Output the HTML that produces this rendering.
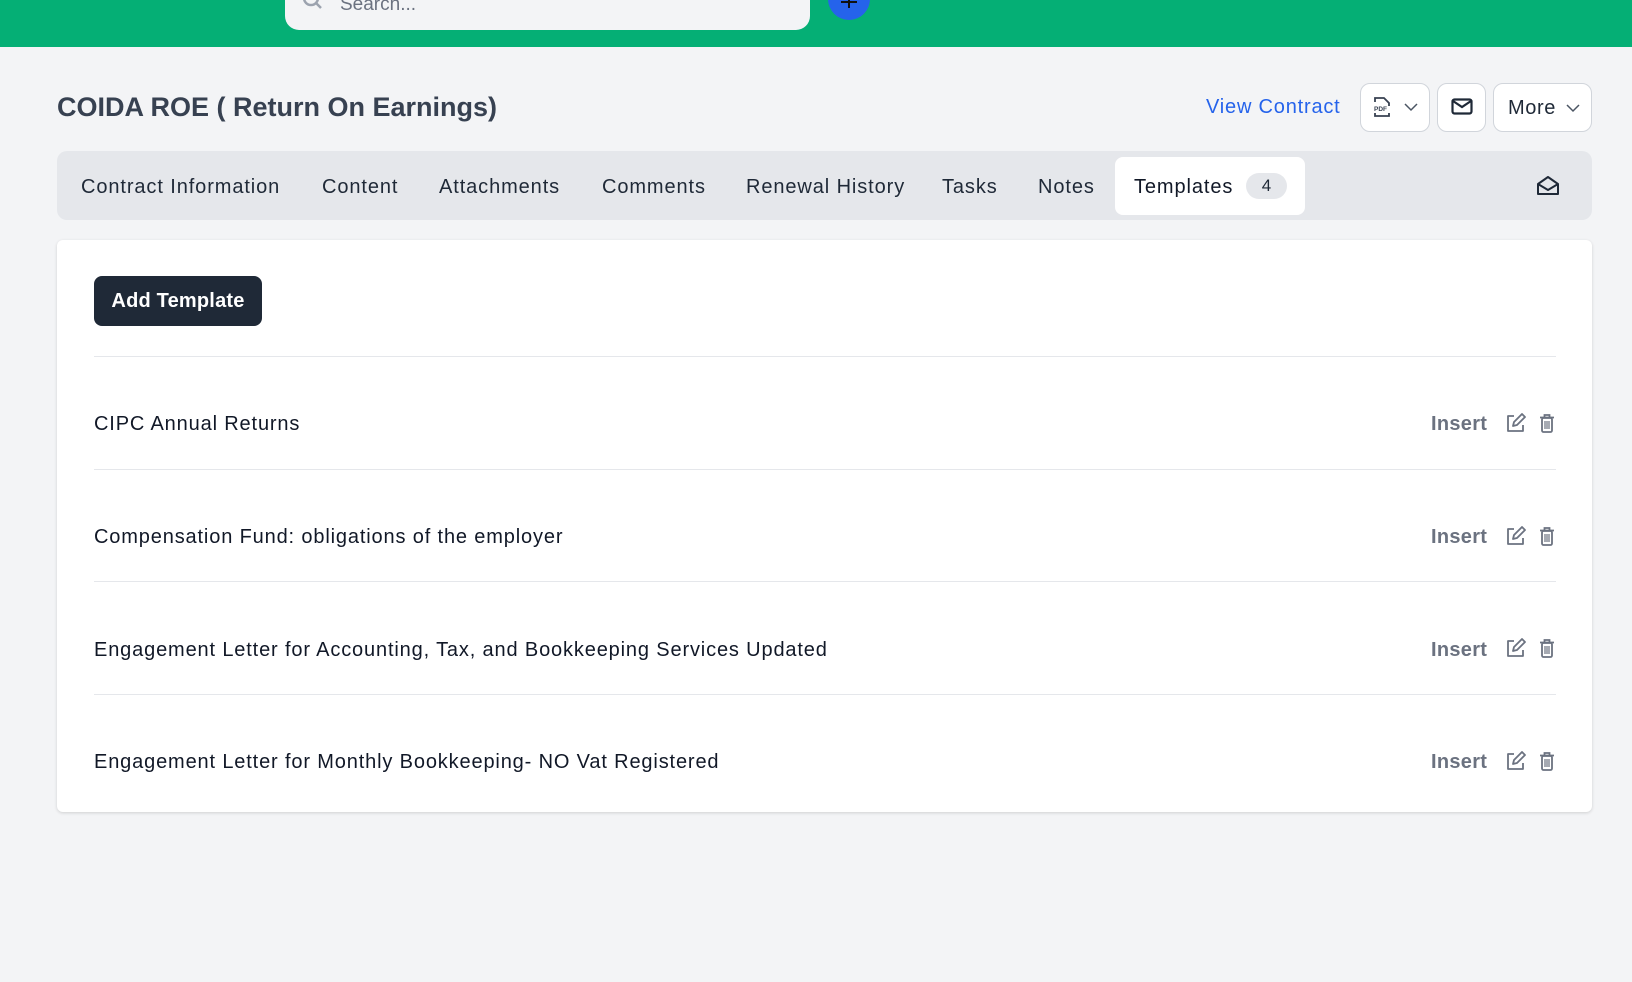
<!DOCTYPE html>
<html><head><meta charset="utf-8"><style>
*{box-sizing:border-box;margin:0;padding:0}
body{width:1632px;height:982px;background:#f3f4f6;font-family:"Liberation Sans",sans-serif;position:relative;overflow:hidden;color:#111827}
.abs{position:absolute}
.hdr{left:0;top:0;width:1632px;height:47px;background:#05af75}
.search{left:285px;top:-20px;width:525px;height:50px;background:#f3f4f6;border-radius:14px}
.plus{left:828px;top:-22px;width:42px;height:42px;border-radius:50%;background:#2563eb}
h1{position:absolute;left:57px;top:92px;font-size:27px;font-weight:bold;color:#374151}
.btn{position:absolute;background:#fff;border:1px solid #d1d5db;border-radius:10px;top:83px;height:49px}
.tabs{left:57px;top:151px;width:1535px;height:69px;background:#e5e7eb;border-radius:10px}
.tab{position:absolute;top:176px;font-size:20px;color:#1f2937;letter-spacing:0.9px}
.card{left:57px;top:240px;width:1535px;height:572px;background:#fff;border-radius:6px;box-shadow:0 1px 3px rgba(0,0,0,.15)}
.row{position:absolute;left:94px;font-size:20px;color:#111827;letter-spacing:0.85px}
.ins{position:absolute;left:1431px;font-size:20px;color:#6b7280;font-weight:bold;letter-spacing:0.3px}
.sep{position:absolute;left:94px;width:1462px;height:1px;background:#e5e7eb}
</style></head><body>
<div class="abs hdr"></div>
<div class="abs search"></div>
<svg class="abs" style="left:302px;top:-6px" width="22" height="20" viewBox="0 0 22 20"><circle cx="9" cy="4" r="7" fill="none" stroke="#9ca3af" stroke-width="2.5"/><path d="M14 9l5 5" stroke="#9ca3af" stroke-width="2.5"/></svg>
<div class="abs" style="left:340px;top:-6px;font-size:19px;color:#6b7280">Search...</div>
<div class="abs plus"></div>
<svg class="abs" style="left:839px;top:0" width="20" height="10"><path d="M10 0v8M2 2h16" stroke="#111" stroke-width="2"/></svg>
<h1>COIDA ROE ( Return On Earnings)</h1>
<div class="abs" style="left:1206px;top:96px;font-size:20px;color:#2563eb;letter-spacing:0.8px">View Contract</div>
<div class="btn" style="left:1360px;width:70px"></div>
<svg class="abs" style="left:1373px;top:96px" width="18" height="22" viewBox="0 0 18 22"><path d="M2 6V2h9l5 5v3M2 17v3h14v-3" fill="none" stroke="#374151" stroke-width="1.8"/><text x="1" y="15" font-size="6.5" font-weight="bold" fill="#374151" font-family="Liberation Sans">PDF</text></svg>
<svg class="abs" style="left:1404px;top:102px" width="14" height="10"><path d="M1 2l6 6 6-6" fill="none" stroke="#4b5563" stroke-width="1.5"/></svg>
<div class="btn" style="left:1437px;width:49px"></div>
<svg class="abs" style="left:1451px;top:98px" width="22" height="18"><rect x="1.5" y="1.5" width="19" height="14" rx="2" fill="none" stroke="#1f2937" stroke-width="2.2"/><path d="M2 3l9 6 9-6" fill="none" stroke="#1f2937" stroke-width="2.2"/></svg>
<div class="btn" style="left:1493px;width:99px"></div>
<div class="abs" style="left:1508px;top:97px;font-size:20px;color:#1f2937;letter-spacing:0.6px">More</div>
<svg class="abs" style="left:1566px;top:103px" width="14" height="10"><path d="M1 2l6 6 6-6" fill="none" stroke="#4b5563" stroke-width="1.5"/></svg>
<div class="abs tabs"></div>
<div class="tab" style="left:81px">Contract Information</div>
<div class="tab" style="left:322px">Content</div>
<div class="tab" style="left:439px">Attachments</div>
<div class="tab" style="left:602px">Comments</div>
<div class="tab" style="left:746px">Renewal History</div>
<div class="tab" style="left:942px">Tasks</div>
<div class="tab" style="left:1038px">Notes</div>
<div class="abs" style="left:1115px;top:157px;width:190px;height:58px;background:#fff;border-radius:8px"></div>
<div class="tab" style="left:1134px;color:#111827">Templates</div>
<div class="abs" style="left:1246px;top:173px;width:41px;height:26px;border-radius:13px;background:#e5e7eb;font-size:17px;text-align:center;line-height:26px;color:#1f2937">4</div>
<svg class="abs" style="left:1536px;top:175px" width="24" height="22" viewBox="0 0 24 22"><path d="M2 9L12 2l10 7v10H2z M2 9l10 6 10-6" fill="none" stroke="#1f2937" stroke-width="2" stroke-linejoin="round"/></svg>
<div class="abs card"></div>
<div class="abs" style="left:94px;top:276px;width:168px;height:50px;background:#1f2937;border-radius:8px;color:#fff;font-size:20px;font-weight:bold;text-align:center;line-height:50px;letter-spacing:0.2px">Add Template</div>
<div class="sep" style="top:356px"></div>
<div class="row" style="top:413px">CIPC Annual Returns</div>
<div class="sep" style="top:469px"></div>
<div class="row" style="top:526px">Compensation Fund: obligations of the employer</div>
<div class="sep" style="top:581px"></div>
<div class="row" style="top:639px">Engagement Letter for Accounting, Tax, and Bookkeeping Services Updated</div>
<div class="sep" style="top:694px"></div>
<div class="row" style="top:751px">Engagement Letter for Monthly Bookkeeping- NO Vat Registered</div>
<div class="ins" style="top:413px">Insert</div><div class="ins" style="top:526px">Insert</div><div class="ins" style="top:639px">Insert</div><div class="ins" style="top:751px">Insert</div>
<svg width="0" height="0" style="position:absolute"><defs>
<g id="ic"><path d="M9 3H3v15h15v-6" fill="none" stroke="#6b7280" stroke-width="1.8" stroke-linejoin="round"/><path d="M8 13l1-4 8-8 3 3-8 8z" fill="none" stroke="#6b7280" stroke-width="1.8" stroke-linejoin="round"/>
<path d="M35 4.5h14M39.5 4.5V2h5v2.5" fill="none" stroke="#6b7280" stroke-width="1.8"/><rect x="37" y="5" width="10" height="14" rx="1.5" fill="none" stroke="#6b7280" stroke-width="1.8"/><path d="M40 8v8M42 8v8M44 8v8" stroke="#6b7280" stroke-width="1.2"/></g></defs></svg>
<svg class="abs" style="left:1505px;top:413px" width="52" height="22"><use href="#ic"/></svg>
<svg class="abs" style="left:1505px;top:526px" width="52" height="22"><use href="#ic"/></svg>
<svg class="abs" style="left:1505px;top:638px" width="52" height="22"><use href="#ic"/></svg>
<svg class="abs" style="left:1505px;top:751px" width="52" height="22"><use href="#ic"/></svg>
</body></html>
